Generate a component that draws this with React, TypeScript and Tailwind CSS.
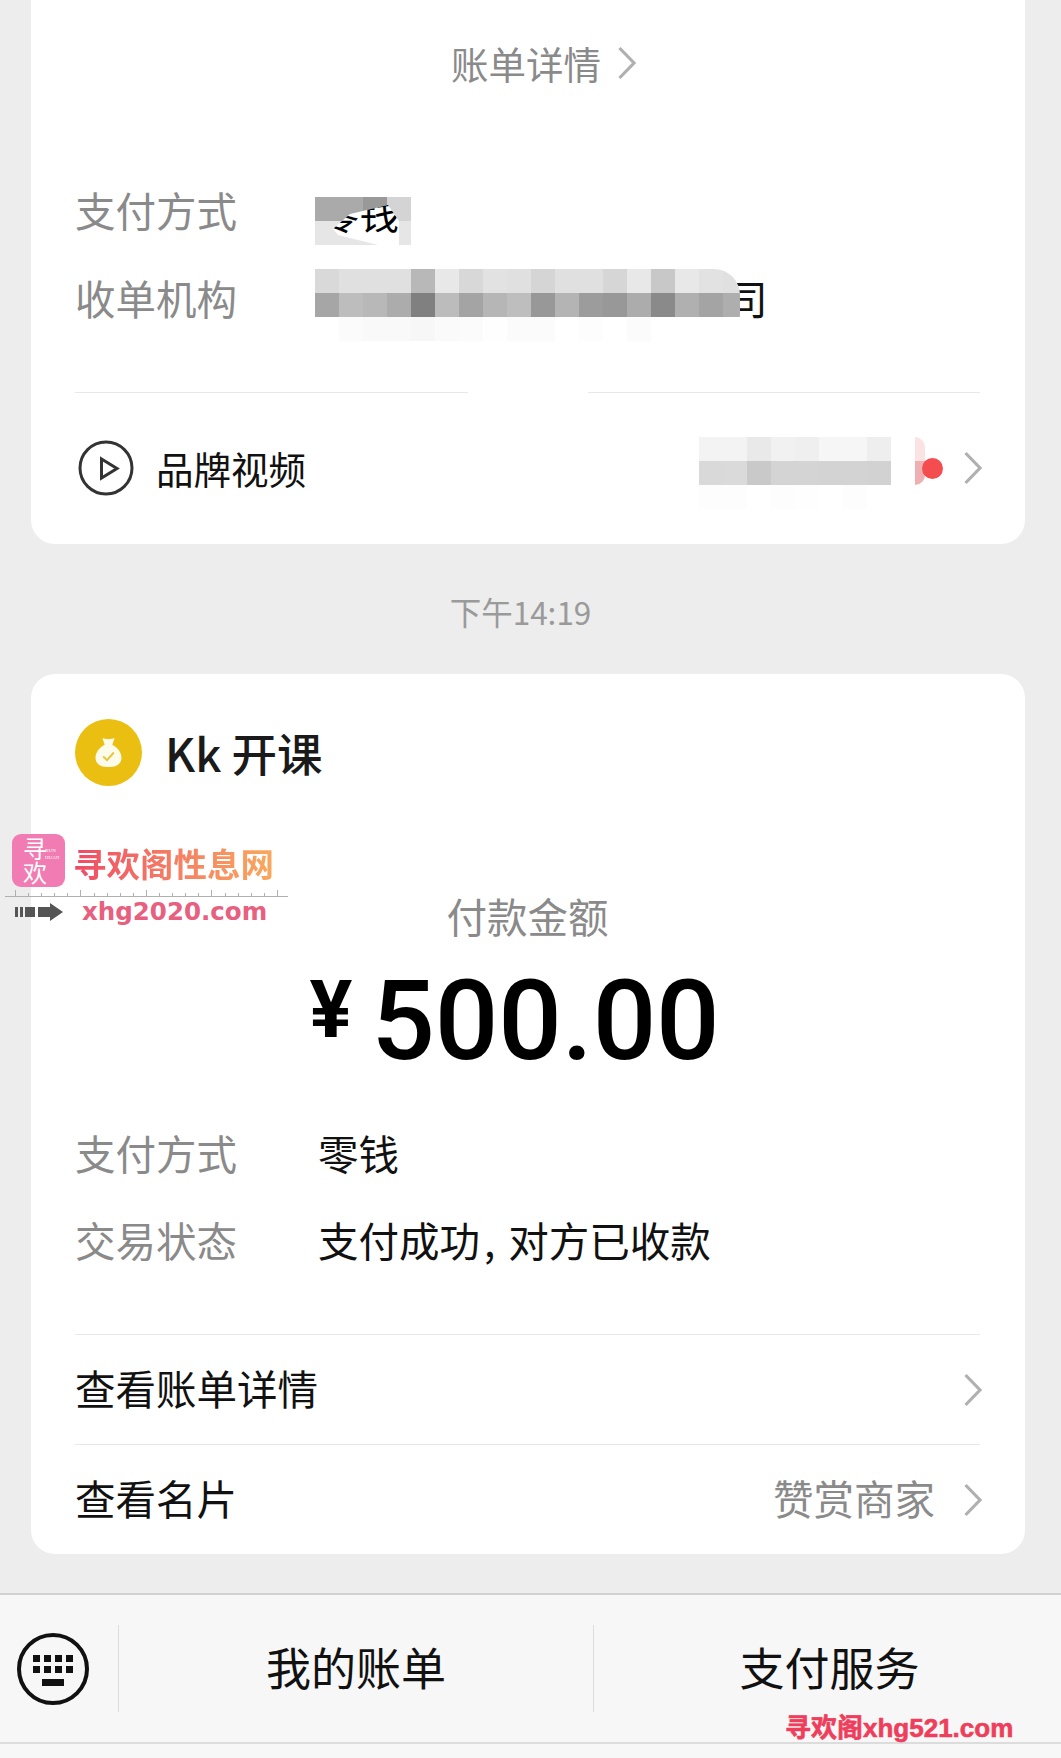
const cjk = "font-['Noto_Sans_CJK_SC','Noto_Sans',sans-serif]";

function Chevron({ className = "" }: { className?: string }) {
  return (
    <svg width="20" height="34" viewBox="0 0 20 34" fill="none" className={className}>
      <path d="M2.5 2 L17 17 L2.5 32" stroke="#b0b0b0" strokeWidth="3.2" />
    </svg>
  );
}

function Mosaic({ rows }: { rows: string[][] }) {
  return (
    <div className="flex flex-col">
      {rows.map((row, i) => (
        <div key={i} className="flex">
          {row.map((color, j) => (
            <div key={j} className="h-6 w-6 shrink-0" style={{ backgroundColor: color }} />
          ))}
        </div>
      ))}
    </div>
  );
}

const orgTiles = [
  ["#d9d9d9", "#e0e0e0", "#e0e0e0", "#e0e0e0", "#b8b8b8", "#e8e8e8", "#d8d8d8", "#e2e2e2", "#e0e0e0", "#d5d5d5", "#e0e0e0", "#e0e0e0", "#d6d6d6", "#e8e8e8", "#c8c8c8", "#e8e8e8", "#e2e2e2", "#e0e0e0"],
  ["#a6a6a6", "#bdbdbd", "#b8b8b8", "#acacac", "#808080", "#bcbcbc", "#a4a4a4", "#b6b6b6", "#bebebe", "#989898", "#b4b4b4", "#9c9c9c", "#989898", "#acacac", "#8a8a8a", "#b0b0b0", "#a4a4a4", "#aeaeae"],
  ["#ffffff", "#fbfbfb", "#f9f9f9", "#f9f9f9", "#f7f7f7", "#fafafa", "#fbfbfb", "#fefefe", "#fbfbfb", "#fbfbfb", "#ffffff", "#fdfdfd", "#ffffff", "#fbfbfb", "#ffffff", "#ffffff", "#ffffff", "#ffffff"],
];

const brandTiles = [
  ["#f3f3f3", "#f3f3f3", "#e9e9e9", "#f1f1f1", "#efefef", "#f6f6f6", "#f6f6f6", "#eeeeee"],
  ["#d9d9d9", "#dadada", "#c9c9c9", "#d4d4d4", "#d4d4d4", "#d3d3d3", "#d3d3d3", "#d2d2d2"],
  ["#fdfdfd", "#fdfdfd", "#ffffff", "#fdfdfd", "#fefefe", "#ffffff", "#fdfdfd", "#ffffff"],
];

const rulerTicks = Array.from({ length: 21 }, (_, i) => i);

function InfoRow({ label, children }: { label: string; children: React.ReactNode }) {
  return (
    <div className="flex items-center">
      <div className="w-[243px] text-[40.5px] leading-[48px] text-[#8a8a8a]">{label}</div>
      <div className="text-[40.5px] leading-[48px] text-[#111]">{children}</div>
    </div>
  );
}

function LinkRow({ label, note, className = "" }: { label: string; note?: string; className?: string }) {
  return (
    <div className={`flex items-center ${className}`}>
      <span className="-mt-[2px] text-[40.5px] text-[#111]">{label}</span>
      <span className="-mt-[2px] ml-auto text-[40.5px] text-[#8a8a8a]">{note}</span>
      <Chevron className="ml-[28px] -mr-[3px]" />
    </div>
  );
}

export default function App() {
  return (
    <div className={`relative h-[1758px] w-[1061px] overflow-hidden bg-[#ededed] ${cjk}`}>
      {/* first card, cut off by the top of the picture */}
      <div className="ml-[31px] mr-[36px] h-[544px] rounded-b-[24px] bg-white pl-[44px] pr-[45px] pt-[41px]">
        <div className="flex items-center justify-center gap-[16px] pl-[33px] text-[37.5px] leading-[44px] text-[#8a8a8a]">
          账单详情
          <Chevron />
        </div>

        <div className="mt-[112px] flex h-[48px] items-start">
          <div className="w-[240px] text-[40.5px] leading-[26px] text-[#8a8a8a]">支付方式</div>
          <div className="relative h-[48px] w-[96px] bg-[#e6e6e6]">
            <div className="flex h-[24px]">
              <div className="w-[48px] bg-[#aaaaaa]" />
              <div className="w-[24px] bg-[#999999]" />
              <div className="w-[24px] bg-[#d4d4d4]" />
            </div>
            <div className="absolute inset-0 bg-white text-black [clip-path:polygon(18px_32px,35px_17px,73px_8px,84px_24px,84px_48px,63px_48px,23px_38px)]">
              <span className="absolute left-[4px] top-[-5px] whitespace-nowrap text-[40px] leading-[40px]">零钱</span>
            </div>
          </div>
        </div>

        <div className="mt-[24px] flex h-[72px] items-start">
          <div className="w-[240px] pt-[5px] text-[40.5px] leading-[48px] text-[#8a8a8a]">收单机构</div>
          <div className="relative z-10 w-[425px] overflow-hidden rounded-r-[26px]">
            <Mosaic rows={orgTiles} />
          </div>
          <div className="-ml-[13px] mt-[5px] text-[40.5px] leading-[48px] text-[#111]">司</div>
        </div>

        <div className="mt-[51px] flex h-px justify-between">
          <div className="w-[393px] bg-[#e8e8e8]" />
          <div className="w-[392px] bg-[#e8e8e8]" />
        </div>

        <div className="mt-[39px] flex h-[72px] items-center">
          <svg width="56" height="56" viewBox="0 0 56 56" fill="none" className="ml-[3px]">
            <circle cx="28" cy="28" r="26" stroke="#333" strokeWidth="3" />
            <path d="M23.5 19 L39 28.5 L23.5 38 Z" stroke="#333" strokeWidth="3" />
          </svg>
          <span className="ml-[22px] text-[37.5px] text-[#111]">品牌视频</span>
          <div className="ml-auto mt-[10px]">
            <Mosaic rows={brandTiles} />
          </div>
          <div className="-mt-[14px] ml-[24px] flex h-[48px] w-[10px] flex-col overflow-hidden rounded-r-full">
            <div className="h-[24px] bg-[#fbe3e4]" />
            <div className="h-[24px] bg-[#efb0b3]" />
          </div>
          <div className="-ml-[3px] h-[21px] w-[21px] rounded-full bg-[#f34d4f]" />
          <Chevron className="ml-[20px] -mr-[3px]" />
        </div>
      </div>

      <div className="mt-[44px] pr-[20px] text-center text-[31.5px] leading-[46px] text-[#9a9a9a]">下午14:19</div>

      {/* payment card */}
      <div className="ml-[31px] mr-[36px] mt-[40px] h-[880px] rounded-[24px] bg-white pl-[44px] pr-[45px]">
        <div className="flex items-center pt-[45px]">
          <div className="flex h-[67px] w-[67px] items-center justify-center rounded-full bg-[#eabf12]">
            <svg width="29" height="33" viewBox="0 0 38 42" fill="none">
              <path d="M11 2 C15 4 23 4 27 2 L24 11 C32 15 36 22 36 28 C36 37 28 40 19 40 C10 40 2 37 2 28 C2 22 6 15 14 11 Z" fill="#fdfbe9" />
              <path d="M12 26 L17 31 L26 21" stroke="#e6c53c" strokeWidth="2.5" />
            </svg>
          </div>
          <span className="ml-[23px] text-[45.5px] font-medium leading-[67px] text-[#1a1a1a]">Kk 开课</span>
        </div>

        <div className="mt-[106px] text-center text-[40.5px] leading-[48px] text-[#8a8a8a]">付款金额</div>

        <div className="mt-[16px] flex items-start justify-center pr-[26px] text-black">
          <span className="mt-[9px] font-['Roboto'] text-[80px] font-bold leading-[90px]">¥</span>
          <span className="ml-[19px] font-['Roboto'] text-[112px] font-medium leading-[130px] tracking-[-0.2px]">500.00</span>
        </div>

        <div className="mt-[43px] flex flex-col gap-[39px]">
          <InfoRow label="支付方式">零钱</InfoRow>
          <InfoRow label="交易状态">
            支付成功<span className="mx-[4px]">, </span>对方已收款
          </InfoRow>
        </div>

        <div className="mt-[70px] h-px bg-[#e8e8e8]" />
        <LinkRow label="查看账单详情" className="h-[109px]" />
        <div className="h-px bg-[#e8e8e8]" />
        <LinkRow label="查看名片" note="赞赏商家" className="h-[109px]" />
      </div>

      {/* bottom menu */}
      <div className="mt-[39px] flex h-[151px] items-center border-b-2 border-t-2 border-b-[#dcdcdc] border-t-[#d0d0d0] bg-[#f7f7f7]">
        <div className="flex w-[118px] items-center justify-center pr-[12px]">
          <svg width="72" height="72" viewBox="0 0 72 72" fill="none">
            <circle cx="36" cy="36" r="34" stroke="#111" strokeWidth="4" />
            <path d="M16 22h7v7h-7zM27 22h7v7h-7zM38 22h7v7h-7zM49 22h7v7h-7zM16 33h7v7h-7zM27 33h7v7h-7zM38 33h7v7h-7zM49 33h7v7h-7zM25 46h22v7H25z" fill="#111" />
          </svg>
        </div>
        <div className="flex h-[87px] w-[475px] items-center justify-center border-l border-[#dcdcdc] pb-[4px] text-[45px] text-[#111]">我的账单</div>
        <div className="flex h-[87px] flex-1 items-center justify-center border-l border-[#dcdcdc] pb-[4px] pl-[4px] text-[45px] text-[#111]">支付服务</div>
      </div>
      <div className="h-[15px] bg-[#f7f7f7]" />

      {/* watermarks */}
      <div className="absolute left-[5px] top-[834px] w-[283px]">
        <div className="flex items-center">
          <div className="relative ml-[7px] h-[53px] w-[53px] rounded-[9px] bg-[#f17cb4] text-white">
            <span className="absolute left-[11px] top-[2px] w-[24px] text-center text-[24px] leading-[24px]">寻欢</span>
            <span className="absolute left-[33px] top-[13px] font-['Liberation_Serif'] text-[5px] leading-[7px]">
              XUN
              <br />
              HUAN
            </span>
          </div>
          <div className="ml-[8px] mt-[4px] bg-gradient-to-r from-[#ee4a66] to-[#f9a85c] bg-clip-text text-[33.5px] font-bold leading-[44px] text-transparent">寻欢阁性息网</div>
        </div>
        <div className="mt-[3px] flex h-[6px] items-end justify-between px-[10px]">
          {rulerTicks.map((tick) => (
            <div key={tick} className={tick % 5 === 0 ? "h-[6px] w-px bg-[#b0b0b0]" : "h-[3px] w-px bg-[#b0b0b0]"} />
          ))}
        </div>
        <div className="h-px bg-[#b0b0b0]" />
        <div className="flex h-[30px] items-center">
          <svg width="48" height="18" viewBox="0 0 48 18" className="ml-[10px]">
            <path d="M0 4h3v10H0zM5 4h3v10H5zM10 4h10v10H10zM23 4h12V0l13 9-13 9v-4H23z" fill="#555" />
          </svg>
          <span className="ml-[19px] font-['DejaVu_Sans'] text-[24.5px] font-bold leading-[30px] text-[#e8607f]">xhg2020.com</span>
        </div>
      </div>

      <div className="absolute left-[785px] top-[1713px] font-['Liberation_Sans','Noto_Sans_CJK_SC',sans-serif] text-[26px] font-bold leading-[30px] text-[#ee3e5c] [-webkit-text-stroke:0.6px_#ee3e5c]">寻欢阁xhg521.com</div>
    </div>
  );
}
